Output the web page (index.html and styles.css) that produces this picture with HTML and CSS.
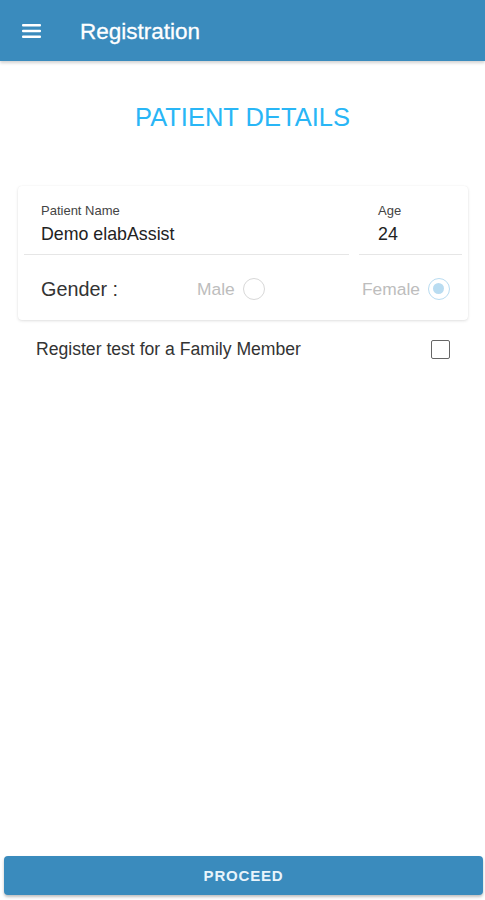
FILE: index.html
```html
<!DOCTYPE html>
<html>
<head>
<meta charset="utf-8">
<link rel="stylesheet" href="styles.css">
</head>
<body>
<div class="app">
  <header class="topbar">
    <svg class="menu" width="19" height="14" viewBox="0 0 19 14"><rect x="0" y="0" width="19" height="2.4" rx="1" fill="#fff"/><rect x="0" y="5.8" width="19" height="2.4" rx="1" fill="#fff"/><rect x="0" y="11.6" width="19" height="2.4" rx="1" fill="#fff"/></svg>
    <span class="title">Registration</span>
  </header>
  <main class="content">
    <h1 class="heading">PATIENT DETAILS</h1>
    <section class="card">
      <div class="fields">
        <div class="field name">
          <div class="label">Patient Name</div>
          <div class="value">Demo elabAssist</div>
        </div>
        <div class="field age">
          <div class="label">Age</div>
          <div class="value">24</div>
        </div>
      </div>
      <div class="gender">
        <span class="gender-label">Gender :</span>
        <span class="option male">Male <span class="radio"></span></span>
        <span class="option female">Female <span class="radio checked"></span></span>
      </div>
    </section>
    <div class="family">
      <span>Register test for a Family Member</span>
      <span class="checkbox"></span>
    </div>
  </main>
  <footer class="footer">
    <button class="proceed">PROCEED</button>
  </footer>
</div>
</body>
</html>
```
FILE: styles.css
```css
* { box-sizing: border-box; }
html, body { margin: 0; padding: 0; }
body { font-family: "Liberation Sans", Arial, sans-serif; background: #fff; }
.app { width: 485px; height: 900px; display: flex; flex-direction: column; }
.topbar {
  height: 61px; background: #3a8bbd; display: flex; align-items: center;
  padding-left: 22px; box-shadow: 0 2px 3px rgba(0,0,0,0.18); flex: none;
}
.menu { display: block; margin-top: 1px; }
.title { color: #fff; font-size: 22.5px; margin-left: 39px; margin-top: 2px; font-weight: 400; -webkit-text-stroke: 0.3px #fff; }
.content { flex: 1; }
.heading {
  margin: 41px 0 0; text-align: center; font-weight: 400; font-size: 25.5px;
  line-height: 30px; color: #29b6f6;
}
.card {
  margin: 54px 17px 0 18px; border-radius: 4px; padding: 0 6px 0 6px;
  box-shadow: 0 1px 3px rgba(0,0,0,0.12), 0 0 1px rgba(0,0,0,0.08);
  height: 134px;
}
.fields { display: flex; gap: 10px; padding-top: 17px; }
.field { border-bottom: 1px solid #e6e6e6; padding-bottom: 9px; }
.field.name { flex: 1; padding-left: 17px; }
.field.age { width: 103px; padding-left: 19px; }
.label { font-size: 13px; color: #444; line-height: 16px; }
.value { font-size: 17.8px; color: #222; line-height: 21px; margin-top: 5px; }
.gender { display: flex; align-items: center; height: 66px; padding-left: 17px; padding-top: 2px; }
.gender-label { font-size: 19.8px; color: #333; width: 156px; }
.option { display: flex; align-items: center; gap: 8px; font-size: 17.4px; color: #bdbdbd; }
.male { width: 165px; }
.radio { width: 22px; height: 22px; border-radius: 50%; border: 1.5px solid #d8d8d8; display: inline-block; position: relative; }
.radio.checked { border-color: #b9dcf1; }
.radio.checked::after {
  content: ""; position: absolute; left: 4px; top: 4px; width: 11px; height: 11px;
  border-radius: 50%; background: #b9dcf1;
}
.family {
  display: flex; justify-content: space-between; align-items: center;
  margin: 19px 35px 0 36px; font-size: 17.6px; color: #333; height: 20px;
}
.checkbox { width: 19px; height: 19px; border: 1.8px solid #666; border-radius: 2px; display: inline-block; }
.footer { flex: none; padding: 0 2px 5px 4px; }
.proceed {
  width: 100%; height: 39px; background: #3a8bbd; border: none; border-radius: 4px;
  color: #e8f4fb; font-family: "Liberation Sans", Arial, sans-serif;
  font-size: 15px; font-weight: 700; letter-spacing: 0.8px;
  box-shadow: 0 2px 3px rgba(0,0,0,0.25);
}
```
